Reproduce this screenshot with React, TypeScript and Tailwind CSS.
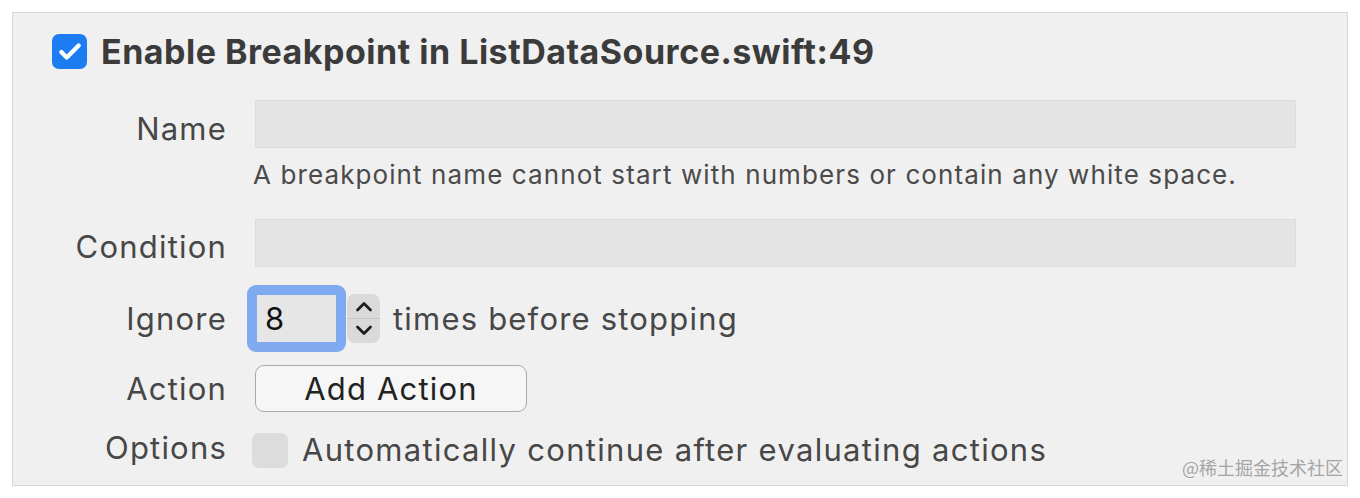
import { Check } from "lucide-react"

const font = { fontFamily: "Inter, 'Noto Sans', sans-serif" }

function Label({ children, className = "" }: { children: string; className?: string }) {
  return (
    <div className={"w-[175px] shrink-0 text-right text-[31px] leading-none tracking-[1.2px] text-[#474747] " + className}>
      {children}
    </div>
  )
}

export default function App() {
  return (
    <div className="w-[1360px] h-[498px] bg-white pt-[12px] pl-[12px]" style={font}>
      <div className="relative w-[1336px] h-[474px] border border-[#d6d6d6] bg-[#f0f0f0] pt-[21px] pl-[39px]">
        {/* header */}
        <div className="flex h-[35px] items-center gap-[14px]">
          <div className="w-[35px] h-[35px] rounded-[7px] bg-[#1c7cf2] flex items-center justify-center">
            <Check className="w-[26px] h-[26px] text-white" strokeWidth={4} />
          </div>
          <div className="text-[34px] leading-none font-bold text-[#3b3b3b] tracking-[0.5px]">
            Enable Breakpoint in ListDataSource.swift:49
          </div>
        </div>

        {/* name */}
        <div className="mt-[31px] flex items-center">
          <Label className="pt-[8px]">Name</Label>
          <div className="ml-[28px] w-[1041px] h-[48px] bg-[#e4e4e4] border border-[#dcdcdc]" />
        </div>
        <div className="mt-[14px] ml-[201px] text-[26px] leading-none text-[#4a4a4a] tracking-[1.1px]">
          A breakpoint name cannot start with numbers or contain any white space.
        </div>

        {/* condition */}
        <div className="mt-[31px] flex items-center">
          <Label className="pt-[6px]">Condition</Label>
          <div className="ml-[28px] w-[1041px] h-[48px] bg-[#e4e4e4] border border-[#dcdcdc]" />
        </div>

        {/* ignore */}
        <div className="mt-[18px] flex items-center">
          <Label>Ignore</Label>
          <div className="ml-[20px] w-[99px] h-[67px] rounded-[9px] bg-[#7faaef] p-[10px]">
            <div className="h-full bg-[#e6e6e6] flex items-center pl-[8px] text-[31px] leading-none text-[#111]">8</div>
          </div>
          <div className="ml-[1px] w-[33px] h-[49px] rounded-[8px] bg-[#dadada] flex flex-col items-center">
            <svg width="22" height="24" viewBox="0 0 22 24">
              <path d="M4.5 16 L11 9.5 L17.5 16" fill="none" stroke="#1e1e1e" strokeWidth="2.8" strokeLinecap="round" strokeLinejoin="round" />
            </svg>
            <div className="w-full h-px bg-[#c4c4c4]" />
            <svg width="22" height="24" viewBox="0 0 22 24">
              <path d="M4.5 8 L11 14.5 L17.5 8" fill="none" stroke="#1e1e1e" strokeWidth="2.8" strokeLinecap="round" strokeLinejoin="round" />
            </svg>
          </div>
          <div className="ml-[13px] text-[31px] leading-none tracking-[1.2px] text-[#474747]">times before stopping</div>
        </div>

        {/* action */}
        <div className="mt-[13px] flex items-center">
          <Label>Action</Label>
          <button className="ml-[28px] w-[272px] h-[47px] rounded-[9px] border-[1.5px] border-[#a9a9a9] bg-[#f6f6f6] text-[31px] leading-none tracking-[1.2px] text-[#222]">
            Add Action
          </button>
        </div>

        {/* options */}
        <div className="mt-[20px] flex items-center">
          <Label className="pb-[5px] pr-[0px] -mr-[3px]">Options</Label>
          <div className="ml-[28px] w-[36px] h-[35px] rounded-[7px] bg-[#dcdcdc]" />
          <div className="ml-[14px] pb-[2px] text-[31px] leading-none tracking-[1.3px] text-[#474747]">
            Automatically continue after evaluating actions
          </div>
        </div>

        <div
          className="absolute right-[4px] bottom-[4px] text-[18px] text-[#a5a5a5]"
          style={{ fontFamily: "'Noto Sans CJK SC', sans-serif" }}
        >
          @稀土掘金技术社区
        </div>
      </div>
    </div>
  )
}
